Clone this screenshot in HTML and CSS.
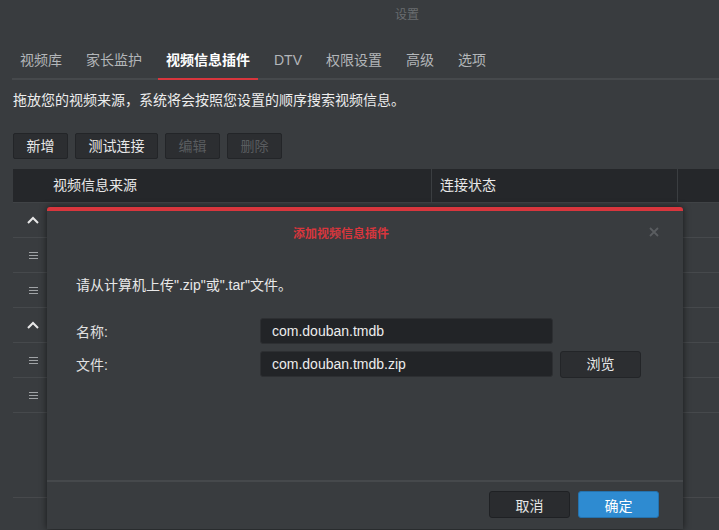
FILE: index.html
```html
<!DOCTYPE html>
<html lang="zh-CN">
<head>
<meta charset="utf-8">
<title>设置</title>
<link rel="stylesheet" href="styles.css">
</head>
<body>
<div class="titlebar">设置</div>
<div class="content">
  <nav class="tabs">
    <div class="tab">视频库</div>
    <div class="tab">家长监护</div>
    <div class="tab active">视频信息插件</div>
    <div class="tab">DTV</div>
    <div class="tab">权限设置</div>
    <div class="tab">高级</div>
    <div class="tab">选项</div>
  </nav>
  <p class="desc">拖放您的视频来源，系统将会按照您设置的顺序搜索视频信息。</p>
  <div class="toolbar">
    <button class="btn">新增</button>
    <button class="btn">测试连接</button>
    <button class="btn disabled">编辑</button>
    <button class="btn disabled">删除</button>
  </div>
  <div class="table">
    <div class="thead">
      <div class="th handle"></div>
      <div class="th src">视频信息来源</div>
      <div class="th status">连接状态</div>
      <div class="th extra"></div>
    </div>
    <div class="tbody">
      <div class="row"><svg class="chev" width="12" height="8" viewBox="0 0 12 8"><polyline points="1,7 6,2 11,7" fill="none" stroke="#e8e8e8" stroke-width="2"/></svg></div>
      <div class="row"><span class="ham"></span></div>
      <div class="row"><span class="ham"></span></div>
      <div class="row"><svg class="chev" width="12" height="8" viewBox="0 0 12 8"><polyline points="1,7 6,2 11,7" fill="none" stroke="#e8e8e8" stroke-width="2"/></svg></div>
      <div class="row"><span class="ham"></span></div>
      <div class="row"><span class="ham"></span></div>
    </div>
  </div>
</div>

<div class="modal">
  <div class="modal-head">
    <span>添加视频信息插件</span>
    <svg class="close" width="10" height="10" viewBox="0 0 10 10"><path d="M1 1 L9 9 M9 1 L1 9" stroke="#5a5d60" stroke-width="1.8"/></svg>
  </div>
  <div class="modal-body">
    <p class="hint">请从计算机上传".zip"或".tar"文件。</p>
    <div class="form">
      <div class="field"><label>名称:</label><div class="input">com.douban.tmdb</div></div>
      <div class="field"><label>文件:</label><div class="input">com.douban.tmdb.zip</div><button class="btn browse">浏览</button></div>
    </div>
  </div>
  <div class="modal-foot">
    <button class="mbtn cancel">取消</button>
    <button class="mbtn ok">确定</button>
  </div>
</div>
</body>
</html>
```
FILE: styles.css
```css
* { box-sizing: border-box; margin: 0; padding: 0; }
html, body { width: 719px; height: 530px; overflow: hidden; }
body {
  position: relative;
  background: #393c3f;
  font-family: "Liberation Sans", "Noto Sans CJK SC", sans-serif;
  color: #e6e6e6;
  font-size: 14px;
}
.titlebar {
  height: 31px;
  line-height: 31px;
  font-size: 12px;
  color: #6a6d70;
  padding-left: 395px;
}
.content { padding-left: 13px; }
.tabs {
  display: flex;
  gap: 8px;
  margin-top: 11px;
  margin-left: -1px;
  border-bottom: 2px solid #46494c;
}
.tab {
  height: 38px;
  padding: 0 8px;
  line-height: 36px;
  font-size: 14px;
  color: #b3b6b9;
  border-bottom: 2px solid transparent;
  margin-bottom: -2px;
}
.tab.active {
  color: #ffffff;
  font-weight: bold;
  border-bottom-color: #d8363d;
}
.desc {
  margin-top: 10px;
  line-height: 20px;
  font-size: 14px;
  color: #ededed;
}
.toolbar {
  display: flex;
  gap: 7px;
  margin-top: 23px;
}
.btn {
  height: 26px;
  padding: 0 12.5px;
  border: 1px solid #232528;
  background: #2c2e31;
  border-radius: 2px;
  font-family: inherit;
  font-size: 14px;
  line-height: 24px;
  color: #e8e8e8;
}
.btn.disabled { color: #595c5f; }
.table { margin-top: 10px; }
.thead {
  display: flex;
  height: 34px;
  background: #25272a;
  border-bottom: 1px solid #404346;
  line-height: 33px;
  font-size: 14px;
  color: #e8e8e8;
}
.th.handle { width: 33px; }
.th.src { width: 386px; padding-left: 7px; border-right: 1px solid #3b3e41; }
.th.status { width: 246px; padding-left: 8px; border-right: 1px solid #3b3e41; }
.th.extra { flex: 1; }
.tbody {
  height: 295px;
  border-bottom: 1px solid #47494c;
}
.row {
  height: 35px;
  border-bottom: 1px solid #46494c;
  display: flex;
  align-items: center;
  padding-left: 14px;
}
.chev { display: block; }
.ham {
  display: block;
  width: 9px;
  height: 7px;
  margin-left: 2px;
  border-top: 1px solid #a0a3a6;
  border-bottom: 1px solid #a0a3a6;
  position: relative;
}
.ham::after {
  content: "";
  position: absolute;
  left: 0;
  right: 0;
  top: 2px;
  height: 1px;
  background: #a0a3a6;
}

.modal {
  position: absolute;
  left: 47px;
  top: 207px;
  width: 636px;
  height: 322px;
  background: #393c3f;
  border-top: 4px solid #d8363d;
  border-radius: 3px 3px 0 0;
  box-shadow: 0 0 7px rgba(0, 0, 0, 0.6);
  display: flex;
  flex-direction: column;
}
.modal-head {
  position: relative;
  height: 42px;
  display: flex;
  align-items: center;
  justify-content: center;
  padding-right: 48px;
  font-size: 12px;
  font-weight: bold;
  color: #d8363d;
}
.close {
  position: absolute;
  right: 24px;
  top: 16px;
}
.modal-body {
  flex: 1;
  padding: 22px 0 0 29px;
}
.hint {
  line-height: 20px;
  font-size: 14px;
  color: #e8e8e8;
}
.form {
  margin-top: 23px;
  display: flex;
  flex-direction: column;
  gap: 7px;
}
.field {
  display: flex;
  align-items: center;
  height: 26px;
}
.field label {
  width: 184px;
  font-size: 14px;
  color: #e0e0e0;
}
.input {
  width: 293px;
  height: 26px;
  background: #222427;
  border: 1px solid #2d2f32;
  border-radius: 3px;
  padding-left: 11px;
  line-height: 24px;
  font-size: 14px;
  color: #ececec;
}
.btn.browse {
  margin-left: 7px;
  width: 81px;
  height: 27px;
  border-radius: 3px;
}
.modal-foot {
  height: 49px;
  border-top: 2px solid #46494c;
  display: flex;
  justify-content: flex-end;
  gap: 8px;
  padding: 9px 24px 0 0;
}
.mbtn {
  width: 81px;
  height: 27px;
  border-radius: 3px;
  font-family: inherit;
  font-size: 14px;
}
.cancel {
  background: #2a2c2f;
  border: 1px solid #1f2124;
  color: #e6e6e6;
}
.ok {
  background: #2e8bd1;
  border: 1px solid #2572ad;
  color: #ffffff;
}
```
